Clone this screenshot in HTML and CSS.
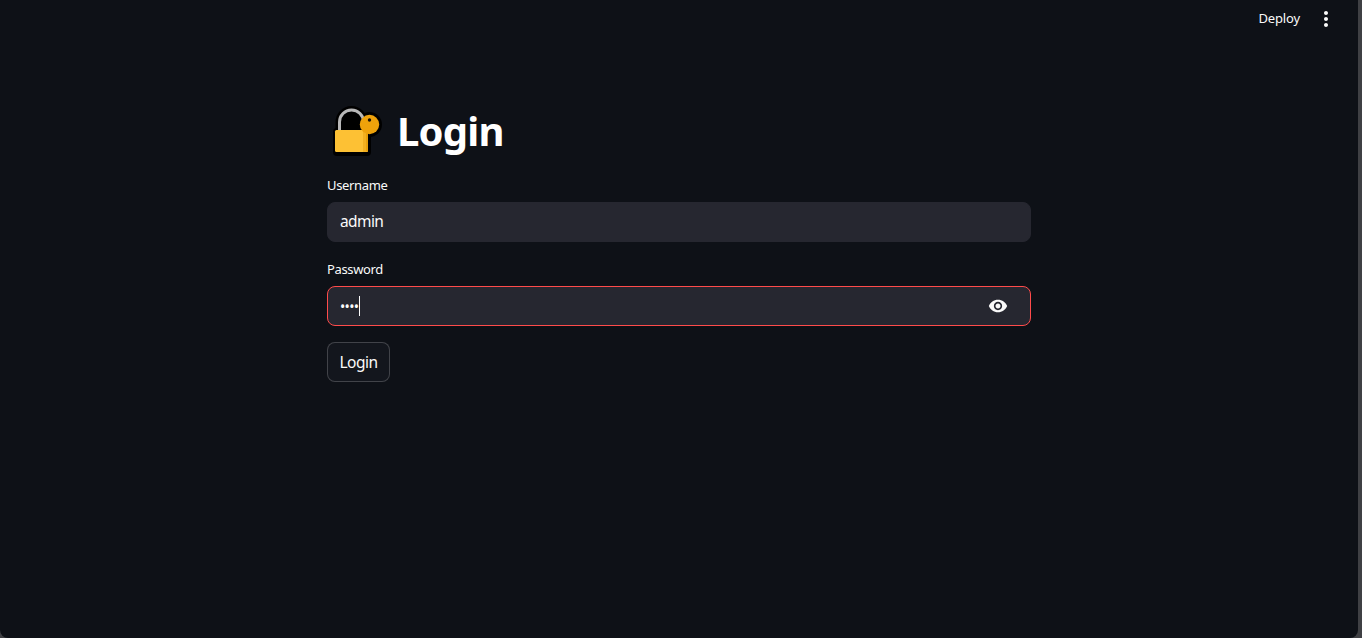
FILE: index.html
```html
<!DOCTYPE html>
<html lang="en">
<head>
<meta charset="utf-8">
<title>Login</title>
<link rel="stylesheet" href="styles.css">
</head>
<body>
<div class="app">
  <header class="topbar">
    <span class="deploy">Deploy</span>
    <button class="menu" aria-label="Menu">
      <svg width="24" height="24" viewBox="0 0 24 24" fill="#fafafa"><path d="M12 8c1.1 0 2-.9 2-2s-.9-2-2-2-2 .9-2 2 .9 2 2 2zm0 2c-1.1 0-2 .9-2 2s.9 2 2 2 2-.9 2-2-.9-2-2-2zm0 6c-1.1 0-2 .9-2 2s.9 2 2 2 2-.9 2-2-.9-2-2-2z"/></svg>
    </button>
  </header>
  <main class="content">
    <h1 class="title">
      <svg class="lock" width="52" height="52" viewBox="0 1 52 52">
        <path d="M9.500 27V18A12 12 0 0 1 33.500 18V27z" fill="#000" stroke="#000" stroke-width="8"/>
        <rect x="3" y="24" width="38" height="28" rx="4" fill="#000"/>
        <circle cx="39.500" cy="20.500" r="12.500" fill="#000"/>
        <path d="M9.500 27V18A12 12 0 0 1 33.500 18V27" fill="none" stroke="#b8b8b8" stroke-width="3"/>
        <rect x="5" y="26" width="33" height="22" rx="1.500" fill="#fdc134"/>
        <path d="M33 26h5v20.500q0 1.500-1.500 1.500H33z" fill="#f3b020"/>
        <path d="M36 26h2v21h-2z" fill="#e8a00c"/>
        <circle cx="39.500" cy="20.500" r="9.700" fill="#eea20b"/>
        <circle cx="39.500" cy="16" r="1.700" fill="#1a1205"/>
      </svg>
      <span class="title-text">Login</span>
    </h1>
    <label class="label">Username</label>
    <div class="field"><span class="value">admin</span></div>
    <label class="label second">Password</label>
    <div class="field focus">
      <span class="dots">••••</span><span class="caret"></span>
      <svg class="eye" width="20" height="20" viewBox="0 0 24 24" fill="#fafafa"><path d="M12 4.5C7 4.5 2.73 7.61 1 12c1.73 4.39 6 7.5 11 7.5s9.27-3.11 11-7.5c-1.73-4.39-6-7.5-11-7.500zM12 17c-2.76 0-5-2.24-5-5s2.24-5 5-5 5 2.24 5 5-2.24 5-5 5zm0-8c-1.66 0-3 1.34-3 3s1.34 3 3 3 3-1.34 3-3-1.34-3-3-3z"/></svg>
    </div>
    <button class="login">Login</button>
  </main>
</div>
</body>
</html>
```
FILE: styles.css
```css
* { box-sizing: border-box; }
html, body { margin: 0; height: 100%; overflow: hidden; }
body { background: #3f4044; color: #fafafa; font-family: "Noto Sans", sans-serif; }
.app { width: 1358px; height: 638px; display: flex; flex-direction: column; background: #0e1117; border-radius: 0 0 8px 8px; }
.topbar { height: 36px; display: flex; align-items: center; justify-content: flex-end; padding-right: 20px; }
.deploy { font-size: 13px; letter-spacing: -0.15px; margin-right: 14px; }
.menu { width: 24px; height: 24px; padding: 0; margin-top: 2px; background: none; border: 0; display: flex; }
.content { width: 704px; margin-left: 327px; padding-top: 67px; }
.title { margin: 0 0 17px; height: 56px; display: flex; align-items: center; gap: 15px; font-size: 40px; font-weight: 700; color: #fff; line-height: 56px; }
.title-text { letter-spacing: -0.8px; }
.lock { margin-left: 3px; }
.label { display: block; font-size: 13px; letter-spacing: -0.35px; line-height: 18px; height: 18px; margin-bottom: 8px; }
.label.second { margin-top: 18px; }
.field { height: 40px; border-radius: 8px; background: #262730; border: 1px solid #262730; display: flex; align-items: center; padding: 0 22px 0 12px; font-size: 15.500px; letter-spacing: -0.6px; }
.value { padding-bottom: 2px; }
.field.focus { border-color: #ff4b4b; }
.dots { font-size: 14px; letter-spacing: -0.7px; }
.caret { width: 1px; height: 20px; background: #fafafa; margin-left: 1px; }
.eye { margin-left: auto; }
.login { display: block; margin-top: 16px; width: 63px; height: 40px; padding: 0; background: #13161d; color: #fafafa; border: 1px solid rgba(250,250,250,0.2); border-radius: 8px; font: 15.500px "Noto Sans", sans-serif; letter-spacing: -0.5px; }
```
